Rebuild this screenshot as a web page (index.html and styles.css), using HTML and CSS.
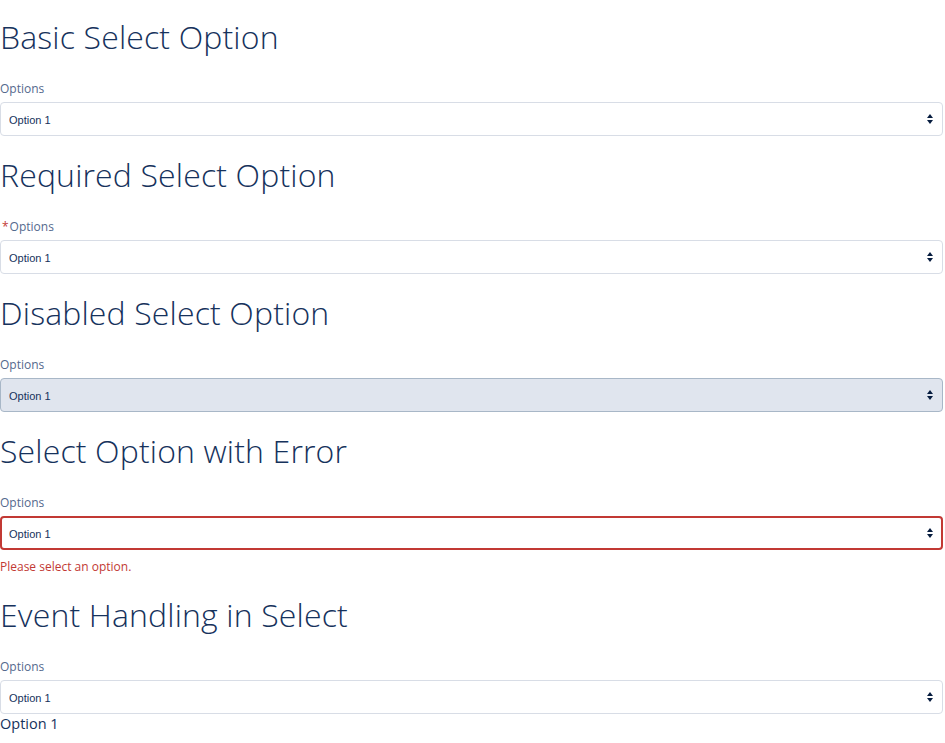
FILE: index.html
```html
<!DOCTYPE html>
<html lang="en">
<head>
<meta charset="utf-8">
<title>Select Options</title>
<link rel="stylesheet" href="styles.css">
</head>
<body>
<main class="page">
  <section class="section">
    <h1 class="heading">Basic Select Option</h1>
    <label class="label">Options</label>
    <div class="select-wrap">
      <select class="select"><option>Option 1</option><option>Option 2</option></select>
      <svg class="arrows" width="6" height="10" viewBox="0 0 6 10"><path d="M3 0 L6 4 H0 Z M0 6 H6 L3 10 Z"/></svg>
    </div>
  </section>
  <section class="section">
    <h1 class="heading">Required Select Option</h1>
    <label class="label"><abbr class="required" title="required">*</abbr>Options</label>
    <div class="select-wrap">
      <select class="select" required><option>Option 1</option><option>Option 2</option></select>
      <svg class="arrows" width="6" height="10" viewBox="0 0 6 10"><path d="M3 0 L6 4 H0 Z M0 6 H6 L3 10 Z"/></svg>
    </div>
  </section>
  <section class="section">
    <h1 class="heading">Disabled Select Option</h1>
    <label class="label">Options</label>
    <div class="select-wrap">
      <select class="select select-disabled" disabled><option>Option 1</option></select>
      <svg class="arrows" width="6" height="10" viewBox="0 0 6 10"><path d="M3 0 L6 4 H0 Z M0 6 H6 L3 10 Z"/></svg>
    </div>
  </section>
  <section class="section">
    <h1 class="heading">Select Option with Error</h1>
    <label class="label">Options</label>
    <div class="select-wrap">
      <select class="select select-error"><option>Option 1</option><option>Option 2</option></select>
      <svg class="arrows" width="6" height="10" viewBox="0 0 6 10"><path d="M3 0 L6 4 H0 Z M0 6 H6 L3 10 Z"/></svg>
    </div>
    <div class="help-error">Please select an option.</div>
  </section>
  <section class="section">
    <h1 class="heading">Event Handling in Select</h1>
    <label class="label">Options</label>
    <div class="select-wrap">
      <select class="select"><option>Option 1</option><option>Option 2</option></select>
      <svg class="arrows" width="6" height="10" viewBox="0 0 6 10"><path d="M3 0 L6 4 H0 Z M0 6 H6 L3 10 Z"/></svg>
    </div>
    <div class="output">Option 1</div>
  </section>
</main>
</body>
</html>
```
FILE: styles.css
```css
* { box-sizing: border-box; }
html, body { margin: 0; padding: 0; background: #ffffff; }
body {
  font-family: "Open Sans", "Noto Sans", sans-serif;
  color: #16325c;
}
.page {
  display: flex;
  flex-direction: column;
  gap: 19px;
  padding: 17px 2px 0 0;
}
.section {
  display: flex;
  flex-direction: column;
}
.heading {
  margin: 0 0 21px 0;
  font-size: 32px;
  line-height: 40px;
  font-weight: 300;
  letter-spacing: 0.15px;
  color: #16325c;
}
.label {
  display: block;
  padding-top: 2px;
  margin-bottom: 4px;
  font-size: 12px;
  line-height: 18px;
  color: #54698d;
}
.required {
  color: #c23934;
  text-decoration: none;
  border: 0;
  margin: 0 1px 0 2px;
}
.select-wrap {
  position: relative;
}
.select {
  display: block;
  width: 100%;
  height: 34px;
  margin: 0;
  padding: 1px 24px 0 8px;
  -webkit-appearance: none;
  appearance: none;
  background: #ffffff;
  border: 1px solid #d8dde6;
  border-radius: 4px;
  font-family: "Liberation Sans", Arial, sans-serif;
  font-size: 11px;
  color: #16325c;
  outline: none;
}
.select-disabled {
  background: #e0e5ee;
  border-color: #a8b7c7;
  color: #16325c;
  opacity: 1;
}
.select-error {
  border: 2px solid #c23934;
  padding-left: 7px;
}
.arrows {
  position: absolute;
  right: 10px;
  top: 12px;
  fill: #061c3f;
  pointer-events: none;
}
.help-error {
  margin-top: 8px;
  font-size: 12px;
  line-height: 18px;
  color: #c23934;
}
.output {
  font-size: 14.5px;
  line-height: 20px;
  color: #16325c;
}
```
